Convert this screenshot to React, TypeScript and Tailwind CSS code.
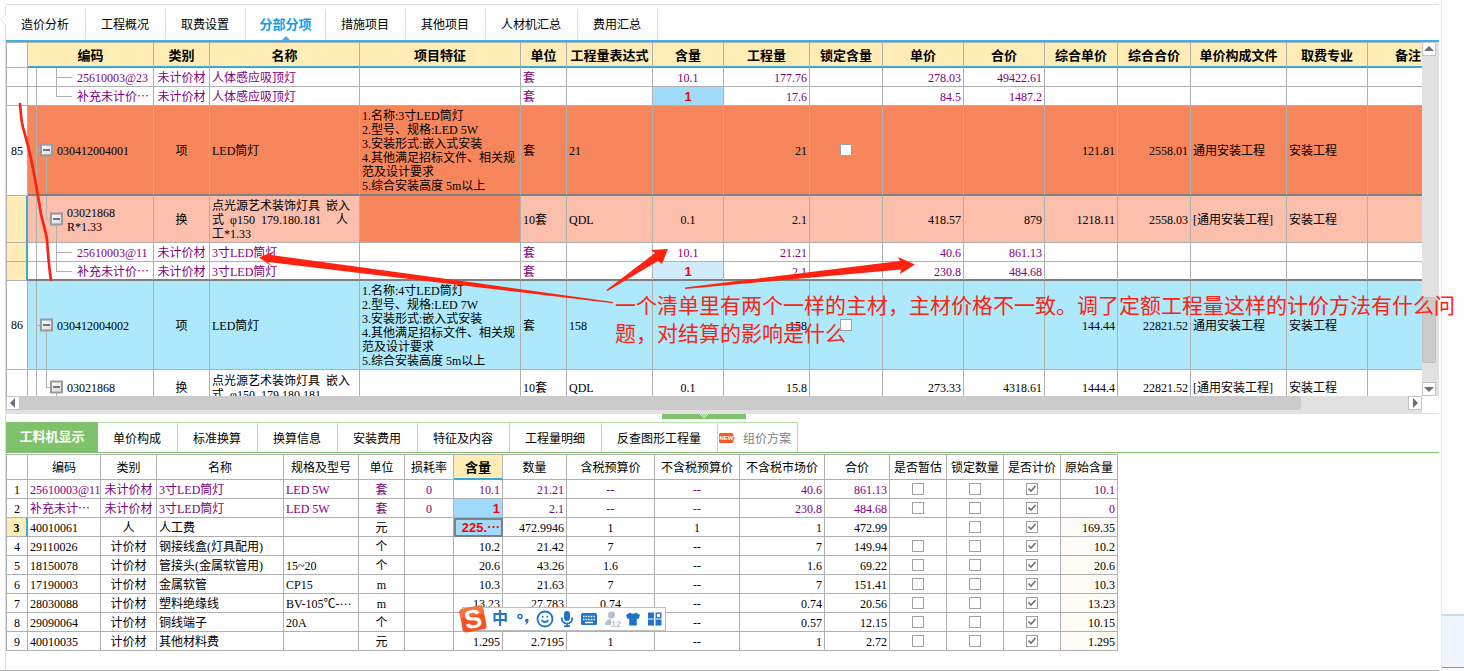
import { Fragment } from "react"
import { Smile } from "lucide-react"

type Row = {
  no?: string
  level: number
  code: string
  kind: string
  name: string
  feature?: string
  cells: string[]
  height: string
  tone: string
  lockBox?: boolean
  group?: boolean
  thick?: boolean
  mark?: string
}

const topTabs = ["造价分析", "工程概况", "取费设置", "分部分项", "措施项目", "其他项目", "人材机汇总", "费用汇总"]

const bottomTabs = ["工料机显示", "单价构成", "标准换算", "换算信息", "安装费用", "特征及内容", "工程量明细", "反查图形工程量"]

const mainColumns = [
  { title: "", width: "w-[22px]" },
  { title: "编码", width: "w-[126px]" },
  { title: "类别", width: "w-[56px]" },
  { title: "名称", width: "w-[150px]" },
  { title: "项目特征", width: "w-[161px]" },
  { title: "单位", width: "w-[46px]" },
  { title: "工程量表达式", width: "w-[86px]" },
  { title: "含量", width: "w-[71px]" },
  { title: "工程量", width: "w-[86px]" },
  { title: "锁定含量", width: "w-[73px]" },
  { title: "单价", width: "w-[81px]" },
  { title: "合价", width: "w-[81px]" },
  { title: "综合单价", width: "w-[73px]" },
  { title: "综合合价", width: "w-[73px]" },
  { title: "单价构成文件", width: "w-[96px]" },
  { title: "取费专业", width: "w-[81px]" },
  { title: "备注", width: "w-[81px]" },
]

// unit, expression, content, quantity, lock, price, total, price2, total2, file, major, note
const cellAlign = [
  "text-left", "text-left", "text-center", "text-right", "text-center", "text-right",
  "text-right", "text-right", "text-right", "text-left", "text-left", "text-left",
]

const purple = "text-[#800080]"
const changed = "font-['Liberation_Sans','Noto_Sans_CJK_SC',sans-serif] text-[13px] font-bold text-[#ff0000]"

const mainRows: Row[] = [
  {
    level: 3, code: "25610003@23", kind: "未计价材", name: "人体感应吸顶灯", height: "h-[19px]", tone: purple,
    cells: ["套", "", "10.1", "177.76", "", "278.03", "49422.61", "", "", "", "", ""],
  },
  {
    level: 4, code: "补充未计价⋯", kind: "未计价材", name: "人体感应吸顶灯", height: "h-[19px]", tone: purple,
    mark: "bg-[#a0dbfb]",
    cells: ["套", "", "1", "17.6", "", "84.5", "1487.2", "", "", "", "", ""],
  },
  {
    no: "85", level: 1, code: "030412004001", kind: "项", name: "LED筒灯", height: "h-[90px]", tone: "bg-[#f8865d] text-black",
    feature: "1.名称:3寸LED筒灯\n2.型号、规格:LED 5W\n3.安装形式:嵌入式安装\n4.其他满足招标文件、相关规\n范及设计要求\n5.综合安装高度 5m以上",
    lockBox: true, thick: true,
    cells: ["套", "21", "", "21", "", "", "", "121.81", "2558.01", "通用安装工程", "安装工程", ""],
  },
  {
    level: 2, code: "03021868\nR*1.33", kind: "换", name: "点光源艺术装饰灯具  嵌入\n式  φ150  179.180.181     人\n工*1.33", height: "h-[47px]",
    tone: "bg-[#fbbfab] text-black", group: true,
    cells: ["10套", "QDL", "0.1", "2.1", "", "418.57", "879", "1218.11", "2558.03", "[通用安装工程]", "安装工程", ""],
  },
  {
    level: 3, code: "25610003@11", kind: "未计价材", name: "3寸LED筒灯", height: "h-[19px]", tone: purple, group: true,
    cells: ["套", "", "10.1", "21.21", "", "40.6", "861.13", "", "", "", "", ""],
  },
  {
    level: 4, code: "补充未计价⋯", kind: "未计价材", name: "3寸LED筒灯", height: "h-[19px]", tone: purple, group: true, thick: true,
    mark: "bg-[#cfebfc]",
    cells: ["套", "", "1", "2.1", "", "230.8", "484.68", "", "", "", "", ""],
  },
  {
    no: "86", level: 1, code: "030412004002", kind: "项", name: "LED筒灯", height: "h-[89px]", tone: "bg-[#ade8fb] text-black",
    feature: "1.名称:4寸LED筒灯\n2.型号、规格:LED 7W\n3.安装形式:嵌入式安装\n4.其他满足招标文件、相关规\n范及设计要求\n5.综合安装高度 5m以上",
    lockBox: true,
    cells: ["套", "158", "", "158", "", "", "", "144.44", "22821.52", "通用安装工程", "安装工程", ""],
  },
  {
    level: 2, code: "03021868", kind: "换", name: "点光源艺术装饰灯具  嵌入\n式  φ150  179.180.181", height: "h-[35px]", tone: "text-black",
    cells: ["10套", "QDL", "0.1", "15.8", "", "273.33", "4318.61", "1444.4", "22821.52", "[通用安装工程]", "安装工程", ""],
  },
]

const detailColumns = [
  { title: "", width: "w-[22px]", align: "text-center" },
  { title: "编码", width: "w-[73px]", align: "text-left" },
  { title: "类别", width: "w-[56px]", align: "text-center" },
  { title: "名称", width: "w-[127px]", align: "text-left" },
  { title: "规格及型号", width: "w-[75px]", align: "text-left" },
  { title: "单位", width: "w-[46px]", align: "text-center" },
  { title: "损耗率", width: "w-[49px]", align: "text-center" },
  { title: "含量", width: "w-[49px]", align: "text-right" },
  { title: "数量", width: "w-[64px]", align: "text-right" },
  { title: "含税预算价", width: "w-[88px]", align: "text-center" },
  { title: "不含税预算价", width: "w-[85px]", align: "text-center" },
  { title: "不含税市场价", width: "w-[85px]", align: "text-right" },
  { title: "合价", width: "w-[65px]", align: "text-right" },
  { title: "是否暂估", width: "w-[57px]", align: "text-center" },
  { title: "锁定数量", width: "w-[57px]", align: "text-center" },
  { title: "是否计价", width: "w-[57px]", align: "text-center" },
  { title: "原始含量", width: "w-[57px]", align: "text-right" },
]

const detailRows = [
  ["1", "25610003@11", "未计价材", "3寸LED筒灯", "LED 5W", "套", "0", "10.1", "21.21", "--", "--", "40.6", "861.13", "off", "off", "on", "10.1"],
  ["2", "补充未计⋯", "未计价材", "3寸LED筒灯", "LED 5W", "套", "0", "1", "2.1", "--", "--", "230.8", "484.68", "off", "off", "on", "0"],
  ["3", "40010061", "人", "人工费", "", "元", "", "225.⋯", "472.9946", "1", "1", "1", "472.99", "", "off", "on", "169.35"],
  ["4", "29110026", "计价材", "钢接线盒(灯具配用)", "", "个", "", "10.2", "21.42", "7", "--", "7", "149.94", "off", "off", "on", "10.2"],
  ["5", "18150078", "计价材", "管接头(金属软管用)", "15~20", "个", "", "20.6", "43.26", "1.6", "--", "1.6", "69.22", "off", "off", "on", "20.6"],
  ["6", "17190003", "计价材", "金属软管", "CP15", "m", "", "10.3", "21.63", "7", "--", "7", "151.41", "off", "off", "on", "10.3"],
  ["7", "28030088", "计价材", "塑料绝缘线", "BV-105℃-···", "m", "", "13.23", "27.783", "0.74", "--", "0.74", "20.56", "off", "off", "on", "13.23"],
  ["8", "29090064", "计价材", "铜线端子", "20A", "个", "", "", "", "", "--", "0.57", "12.15", "off", "off", "on", "10.15"],
  ["9", "40010035", "计价材", "其他材料费", "", "元", "", "1.295", "2.7195", "1", "--", "1", "2.72", "off", "off", "on", "1.295"],
]

function Check({ label, on }: { label: string; on?: boolean }) {
  return (
    <span className="mx-auto grid size-3 *:col-start-1 *:row-start-1">
      <input
        type="checkbox"
        aria-label={label}
        defaultChecked={on}
        className="peer block size-3 appearance-none border border-[#a0a0a0] bg-white"
      />
      <svg viewBox="0 0 12 12" className="pointer-events-none hidden size-3 peer-checked:block">
        <path d="M2.5 5.5 L5 8 L9.5 3" fill="none" stroke="#6b6e80" strokeWidth="1.6" />
      </svg>
    </span>
  )
}

function Expander() {
  return (
    <button aria-label="折叠" className="grid size-[13px] place-items-center border-2 border-[#9a9a9a] bg-linear-to-br from-white to-[#d8d8e0]">
      <span className="block h-px w-[7px] bg-black" />
    </button>
  )
}

// guide lines of the tree, drawn behind the code text
function Guides({ level }: { level: number }) {
  const line = "absolute bg-[#b0b0b0]"
  return (
    <>
      <span className={`${line} inset-y-0 left-2 w-px`} />
      {level === 1 && (
        <>
          <span className={`${line} top-1/2 left-2 h-px w-1`} />
          <span className={`${line} top-1/2 bottom-0 left-[18px] w-px`} />
          <span className="absolute top-1/2 left-3 -translate-y-1/2"><Expander /></span>
        </>
      )}
      {level === 2 && (
        <>
          <span className={`${line} top-0 bottom-1/2 left-[18px] w-px`} />
          <span className={`${line} top-1/2 left-[18px] h-px w-1`} />
          <span className={`${line} top-1/2 bottom-0 left-7 w-px`} />
          <span className="absolute top-1/2 left-[22px] -translate-y-1/2"><Expander /></span>
        </>
      )}
      {level === 3 && <span className={`${line} inset-y-0 left-7 w-px`} />}
      {level === 4 && <span className={`${line} top-0 bottom-1/2 left-7 w-px`} />}
      {level > 2 && <span className={`${line} top-1/2 left-7 h-px w-4`} />}
    </>
  )
}

const indent = ["", "pl-[29px]", "pl-[39px]", "pl-[49px]", "pl-[49px]"]

function MainTable() {
  return (
    <table className="w-[1443px] table-fixed border-separate border-spacing-0">
      <thead>
        <tr>
          {mainColumns.map((col, i) => (
            <th
              key={col.title}
              className={`${col.width} h-[26px] border-t border-r border-[#b0b0b0] px-0 pt-0.5 pb-0 text-[13px] font-bold ${
                i === 0 ? "border-b border-l bg-white" : "border-b-2 border-b-[#3aa9d6] bg-[#ffedb5]"
              }`}
            >
              {col.title}
            </th>
          ))}
        </tr>
      </thead>
      <tbody>
        {mainRows.map((row, r) => {
          const edge = `border-r border-r-[#b0b0b0] pb-0 ${row.thick ? "border-b-2 border-b-[#808080]" : "border-b border-b-[#b0b0b0]"}`
          return (
            <tr key={r} className={`whitespace-pre ${row.tone}`}>
              <td
                className={`border-b border-l border-[#b0b0b0] p-0 text-center text-black ${row.height} ${
                  row.group ? "border-r-2 border-r-[#3aa9d6] bg-[#ffedb5]" : "border-r bg-white"
                }`}
              >
                {row.no}
              </td>
              <td className={`relative pt-0.5 pr-0 ${edge} ${indent[row.level]}`}>
                <Guides level={row.level} />
                {row.code}
              </td>
              <td className={`px-0 pt-0.5 text-center ${edge}`}>{row.kind}</td>
              <td className={`pt-0.5 pr-0 pl-0.5 ${edge}`}>{row.name}</td>
              <td className={`pt-0.5 pr-0 pl-0.5 ${edge} ${row.level === 2 && row.group ? "bg-[#f8865d]" : ""}`}>{row.feature}</td>
              {row.cells.map((text, i) => (
                <td
                  key={i}
                  className={`px-0.5 ${text ? "pt-0.5" : "pt-0"} ${edge} ${cellAlign[i]} ${i === 2 && row.mark ? `${row.mark} ${changed}` : ""}`}
                >
                  {i === 4 && row.lockBox ? <Check label="锁定含量" /> : text}
                </td>
              ))}
            </tr>
          )
        })}
      </tbody>
    </table>
  )
}

function detailCellStyle(r: number, c: number) {
  if (c === 0) {
    return r === 2
      ? "border-l border-r-2 border-r-[#3aa9d6] bg-[#ffedb5] font-bold text-black"
      : "border-l text-black"
  }
  if (c === 7 && r === 1) return `bg-[#a0dbfb] ${changed}`
  if (c === 7 && r === 2) return `bg-[#a0dbfb] outline-2 -outline-offset-2 outline-[#808080] ${changed}`
  if (c === 16 && r > 1) return "bg-[#fefbf6]"
  return ""
}

function DetailTable() {
  return (
    <table className="w-[1112px] table-fixed border-separate border-spacing-0">
      <thead>
        <tr>
          {detailColumns.map((col, i) => (
            <th
              key={col.title}
              className={`${col.width} h-[26px] border-t border-r border-[#b0b0b0] px-0 pt-0.5 pb-0 ${i === 0 ? "border-l" : ""} ${
                i === 7 ? "border-b-2 border-b-[#3aa9d6] bg-[#ffedb5] text-[13px] font-bold" : "border-b font-normal"
              }`}
            >
              {col.title}
            </th>
          ))}
        </tr>
      </thead>
      <tbody>
        {detailRows.map((row, r) => (
          <tr key={r} className={r < 2 ? purple : "text-black"}>
            {row.map((text, c) => {
              const box = text === "on" || text === "off"
              return (
                <td
                  key={c}
                  className={`h-[19px] border-r border-b border-[#b0b0b0] pb-0 whitespace-nowrap ${box ? "pt-0" : "pt-0.5"} ${c === 0 ? "px-0" : "px-0.5"} ${detailColumns[c].align} ${detailCellStyle(r, c)}`}
                >
                  {box ? <Check label={detailColumns[c].title} on={text === "on"} /> : text}
                </td>
              )
            })}
          </tr>
        ))}
      </tbody>
    </table>
  )
}

function ScrollButton({ label, points }: { label: string; points: string }) {
  return (
    <button aria-label={label} className="grid size-3.5 shrink-0 place-items-center border border-[#c4c4c4] bg-white">
      <svg viewBox="0 0 10 10" className="size-2.5">
        <polygon points={points} fill="#6b6e78" />
      </svg>
    </button>
  )
}

function ImeBar() {
  return (
    <div className="absolute top-[607px] left-[462px] flex h-6 w-[204px] items-center border border-[#b8bcc4] bg-white text-[#1f73c9]">
      <svg viewBox="0 0 30 28" className="-ml-[5px] h-7 w-[30px] shrink-0">
        <g transform="rotate(-11 15 14)">
          <rect x="3" y="2" width="24" height="24" rx="3" fill="#f4511e" />
          <rect x="3" y="2" width="24" height="9" rx="3" fill="#f87340" />
          <text x="15" y="23" textAnchor="middle" fontSize="26" fontWeight="bold" fill="#fff" fontFamily="Liberation Sans">S</text>
        </g>
      </svg>
      <span className="ml-1 text-[16px] leading-5 font-bold">中</span>
      <svg viewBox="0 0 14 14" className="ml-2 size-3.5">
        <circle cx="4" cy="4.5" r="2" fill="none" stroke="currentColor" strokeWidth="1.4" />
        <path d="M9 8.5a1.8 1.8 0 1 1 3.5 .6c-.2 1.8-1.3 3-2.8 3.7l-.4-.8c.8-.5 1.2-1 1.3-1.7A1.8 1.8 0 0 1 9 8.5z" fill="currentColor" />
      </svg>
      <Smile className="ml-1.5 size-[18px] shrink-0" strokeWidth={2.4} />
      <svg viewBox="0 0 14 18" className="ml-1.5 h-[18px] w-3.5">
        <rect x="4" y="1" width="6" height="10" rx="3" fill="currentColor" />
        <path d="M1.8 7.5v1a5.2 5.2 0 0 0 10.4 0v-1M7 13.5V16M4 16.2h6" fill="none" stroke="currentColor" strokeWidth="1.8" />
      </svg>
      <svg viewBox="0 0 18 14" className="ml-1.5 h-3.5 w-[18px]">
        <rect x="1" y="1" width="16" height="12" rx="1.5" fill="currentColor" />
        <path d="M3 4.5h12M3 7.5h12" stroke="#fff" strokeWidth="1.5" strokeDasharray="1.5 1.1" />
        <path d="M5 10.5h8" stroke="#fff" strokeWidth="1.5" />
      </svg>
      <svg viewBox="0 0 18 16" className="ml-1.5 h-4 w-[18px]">
        <circle cx="7.5" cy="4" r="3.5" fill="#b5bfd4" />
        <path d="M1 14c0-4 3-6 6.5-6s5 1.5 5.5 3v3z" fill="#b5bfd4" />
        <rect x="7" y="8" width="11" height="8" fill="#fff" />
        <text x="7" y="15.5" fontSize="9" fontWeight="bold" fill="#b5bfd4" fontFamily="Liberation Sans">12</text>
      </svg>
      <svg viewBox="0 0 14 14" className="ml-1 size-3.5">
        <path d="M4 .5c1 1.6 5 1.6 6 0l4 2.5-1.5 4-1.7-.6V13.5H3.2V6.4L1.5 7 0 3z" fill="currentColor" />
      </svg>
      <svg viewBox="0 0 14 14" className="ml-2 size-3.5">
        <path d="M0 .5h6v6H0zM0 7.5h6v6H0zM7.5 7.5h6v6h-6z" fill="currentColor" />
        <rect x="8.2" y="1.2" width="4.6" height="4.6" fill="none" stroke="currentColor" strokeWidth="1.4" />
      </svg>
    </div>
  )
}

// hand drawn notes lying over the grid
function Notes() {
  return (
    <>
      <svg viewBox="0 0 930 310" className="pointer-events-none absolute top-0 left-0 h-[310px] w-[930px]">
        <path
          d="M20 104 C21 115 21 122 24 131 C28 145 31 158 33 168 C36 184 38 196 41 214 C43 224 46 231 47 240 C48 254 49 268 51 280"
          fill="none" stroke="#fe2210" strokeWidth="2.7" strokeLinecap="round"
        />
        <g fill="#fe2210">
          <polygon points="259,257.5 275,251 271,255 480,283.5 613,302 613,303.2 480,287.5 268,262 273,267" />
          <polygon points="668,249 651,250 655,253 606.5,290 607.5,291 658,261 662,264" />
          <polygon points="915,264.5 898,257 900,261 685,287.5 685,289 901,269.5 900,274" />
        </g>
      </svg>
      <p className="pointer-events-none absolute top-[290px] left-[615px] font-['Noto_Sans_CJK_SC',sans-serif] text-[21px] leading-7 whitespace-nowrap text-[#fe2210]">
        一个清单里有两个一样的主材，主材价格不一致。调了定额工程量这样的计价方法有什么问
        <br />
        题，对结算的影响是什么
      </p>
    </>
  )
}

function App() {
  return (
    <div className="relative flex min-h-screen overflow-hidden bg-white font-['Liberation_Serif','Noto_Sans_CJK_SC',serif] text-[12px] leading-[14px] text-black">
      <div className="mr-0.5 flex min-w-0 flex-1 border-b border-[#b0b0b0]">
        <div className="mt-1.5 w-1.5 shrink-0 border-r border-[#dedede]">
          <svg viewBox="0 0 6 14" className="mt-[7px] h-3.5 w-1.5">
            <path d="M6 1 L.5 6.5 L6 12.5" fill="#fff" stroke="#dedede" />
          </svg>
        </div>

        <main className="min-w-0 flex-1">
          <nav className="mt-1 flex h-9 border-t border-[#dedede] pt-1">
            {topTabs.map((tab) => (
              <Fragment key={tab}>
                {tab === "分部分项" ? (
                  <button className="relative w-20 border-r border-[#dedede] text-[13px] font-bold text-[#0f9fe8]">
                    {tab}
                    <svg viewBox="0 0 8 4" className="absolute bottom-0 left-9 h-1 w-2">
                      <polygon points="4,0 8,4 0,4" fill="#40b0e0" />
                    </svg>
                  </button>
                ) : (
                  <button className="border-r border-[#dedede] bg-linear-to-b from-white to-[#fafafa] pr-4 pl-[15px]">{tab}</button>
                )}
              </Fragment>
            ))}
          </nav>

          <div className="flex h-[356px] border-t-2 border-[#40b0e0]">
            <div className="min-w-0 flex-1 overflow-hidden">
              <MainTable />
            </div>
            <div className="flex w-[17px] shrink-0 flex-col bg-[#e1e1e1]">
              <ScrollButton label="向上" points="5,2 10,7 0,7" />
              <div className="flex-1" />
              <div className="h-[66px] w-3.5 rounded-xs border border-[#c0c0c0] bg-[#cbcbcb]" />
              <div className="h-[19px]" />
              <ScrollButton label="向下" points="0,3 10,3 5,8" />
            </div>
          </div>

          <div className="flex border-b border-[#e1e1e1]">
            <div className="flex h-[17px] flex-1 bg-[#e1e1e1]">
              <ScrollButton label="向左" points="7,0 7,10 2,5" />
              <div className="h-3.5 flex-12 rounded-xs bg-[#cbcbcb]" />
              <div className="flex-1" />
              <ScrollButton label="向右" points="3,0 8,5 3,10" />
            </div>
            <div className="w-[17px]" />
          </div>

          <div className="flex h-2 pl-[656px]">
            <button aria-label="收起" className="grid h-[5px] w-[84px] place-items-center bg-[#80c26b]">
              <svg viewBox="0 0 10 5" className="h-[5px] w-2.5">
                <path d="M1 0 L5 4 L9 0 M3 0 L5 1.5 L7 0" fill="none" stroke="#e6f5e0" />
              </svg>
            </button>
          </div>

          <nav className="flex h-[31px] border-b border-[#80c26b]">
            {bottomTabs.map((tab, i) => (
              <Fragment key={tab}>
                {i === 0 ? (
                  <button className="w-[92px] bg-[#80c26b] text-[13px] font-bold text-white">{tab}</button>
                ) : (
                  <button className="border-t border-r border-[#b2e3a1] pt-0.5 pr-4 pl-[15px]">{tab}</button>
                )}
              </Fragment>
            ))}
            <button className="flex items-center gap-2 border-t border-r border-[#b2e3a1] pr-[6px] pl-px text-[#808080]">
              <svg viewBox="0 0 16 10" className="h-2.5 w-4">
                <path d="M1 0h12.5l1 1.5v2L16 5l-1.5 1.5v2l-1 1.5H1L0 9V1z" fill="#fb5a28" />
                <text x="7.5" y="7.2" textAnchor="middle" fontSize="6" fontWeight="bold" fill="#fff" fontFamily="Liberation Sans">NEW</text>
              </svg>
              <span className="pt-0.5">组价方案</span>
            </button>
          </nav>

          <div className="pt-px">
            <DetailTable />
          </div>
        </main>
      </div>

      <aside className="flex w-[23px] shrink-0 flex-col border-l border-[#ececec] bg-[#fcfcfc]">
        <div className="flex-1" />
        <div className="mb-[3px] h-[54px] border-t-2 border-b border-t-[#cbd9ec] border-b-[#909090] bg-[#f0f4fd]" />
      </aside>

      <Notes />
      <ImeBar />
    </div>
  )
}

export default App
